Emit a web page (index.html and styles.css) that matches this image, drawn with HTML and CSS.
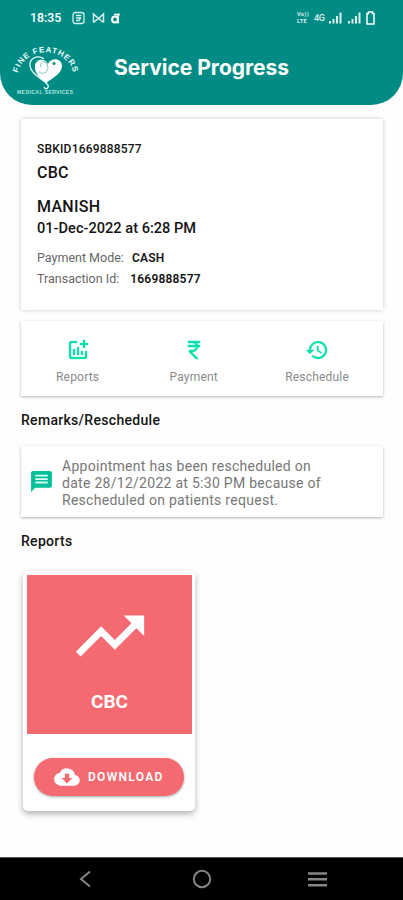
FILE: index.html
```html
<!DOCTYPE html>
<html lang="en">
<head>
<meta charset="utf-8">
<title>Service Progress</title>
<link rel="stylesheet" href="styles.css">
</head>
<body>
<header class="header">
  <div class="status">
    <span class="time">18:35</span>
    <svg class="notices" width="50" height="14" viewBox="0 0 50 14" fill="none" stroke="#d5efed" stroke-width="1.3">
      <rect x="1" y="1.500" width="11" height="11" rx="2.500"/><path d="M4 4.500h5.500M4 7h5M4 9.500h3l2-3"/>
      <path d="M21.500 11.500V3l5 4.500 5-4.500v8.500M21.500 11.500l5-4 5 4" stroke-width="1.500"/>
      <circle cx="43" cy="8.500" r="2.900" stroke="#fff" stroke-width="2"/><path d="M46 12.500V2.500M42 3.500h6" stroke="#fff" stroke-width="1.700"/>
    </svg>
    <div class="signals">
      <div class="volte"><span>Vo))</span><span>LTE</span></div>
      <span class="network">4G</span>
      <svg width="46" height="14" viewBox="0 0 46 14" fill="#d9f0ee">
        <path d="M0 10h2v2.500H0zM3.500 8h2v4.500h-2zM7 5h2v7.500H7zM10.500 1.500h2v11h-2zM19 10h2v2.500h-2zM22.500 8h2v4.500h-2zM26 5h2v7.500h-2zM29.500 1.500h2v11h-2z"/>
        <path d="M38 2.500h1.500V1h4v1.500H45V13h-7z" fill="none" stroke="#fff" stroke-width="1.500"/>
      </svg>
    </div>
  </div>
  <div class="titlebar">
    <svg class="logo" width="70" height="56" viewBox="0 0 70 56">
      <path id="arc" d="M8 31C14 3.500 57 3.500 63.500 31" fill="none"/>
      <text class="logo-name"><textPath href="#arc">FINE FEATHERS</textPath></text>
      <path d="M36 41C31 36 24 32 25 24c1-8 10-8 13-2 3-7 14-6 14 2 0 7-9 12-16 17z" fill="#fff"/>
      <path d="M34 17c-7-5-15 0-14 7 1 9 14 13 18 19 1 4-3 5-4 2" fill="none" stroke="#e8ffff" stroke-width="1.300"/>
      <path d="M29 30c6 4 11-2 8-8-2-4-8-2-6 3" fill="none" stroke="#7cc7c3"/>
      <circle cx="44" cy="21.500" r="1.500" fill="#008c84"/>
      <text class="logo-sub" x="7" y="52" textLength="56">MEDICAL SERVICES</text>
    </svg>
    <h1 class="title">Service Progress</h1>
  </div>
</header>
<main class="content">
  <section class="card booking">
    <div class="booking-id">SBKID1669888577</div>
    <div class="test">CBC</div>
    <div class="patient">MANISH</div>
    <div class="date">01-Dec-2022 at 6:28 PM</div>
    <div class="detail payment">Payment Mode:<b>CASH</b></div>
    <div class="detail transaction">Transaction Id:<b>1669888577</b></div>
  </section>
  <nav class="card actions">
    <a class="action"><svg width="24" height="24" viewBox="0 0 24 24" fill="#0be0ad" stroke="#0be0ad" stroke-width=".3"><path d="M22 5v2h-3v3h-2V7h-3V5h3V2h2v3h3zm-3 14H5V5h6V3H5c-1.100 0-2 .9-2 2v14c0 1.100.9 2 2 2h14c1.100 0 2-.9 2-2v-6h-2v6zm-4-6v4h2v-4h-2zm-4 4h2V9h-2v8zm-2 0v-6H7v6h2z"/></svg><span>Reports</span></a>
    <a class="action middle"><svg width="24" height="24" viewBox="0 0 24 24" fill="#0be0ad" stroke="#0be0ad" stroke-width=".5"><path d="M13.660 7c-.56-1.180-1.760-2-3.160-2H6V3h12v2h-3.260c.48.580.84 1.260 1.050 2H18v2h-2.020c-.25 2.800-2.610 5-5.480 5h-.73l6.730 7h-2.770L7 14v-2h3.500c1.760 0 3.220-1.300 3.460-3H6V7h7.660z"/></svg><span>Payment</span></a>
    <a class="action last"><svg width="24" height="24" viewBox="0 0 24 24" fill="#0be0ad" stroke="#0be0ad" stroke-width=".3"><path d="M13 3a9 9 0 0 0-9 9H1l3.890 3.890.07.140L9 12H6a7 7 0 1 1 2.060 4.940l-1.420 1.420A9 9 0 1 0 13 3zm-1 5v5l4.280 2.540.72-1.210-3.500-2.080V8H12z"/></svg><span>Reschedule</span></a>
  </nav>
  <h2 class="heading">Remarks/Reschedule</h2>
  <section class="card remark">
    <svg width="25" height="25" viewBox="0 0 24 24" fill="#04bf98"><path d="M20 2H4c-1.100 0-2 .9-2 2v18l4-4h14c1.100 0 2-.9 2-2V4c0-1.100-.9-2-2-2z"/><path fill="#d9fff5" d="M6 5.500h12v1.800H6zm0 3.300h12v1.800H6zm0 3.300h12v1.800H6z"/></svg>
    <p>Appointment has been rescheduled on<br>date 28/12/2022 at 5:30 PM because of<br>Rescheduled on patients request.</p>
  </section>
  <h2 class="heading reports-heading">Reports</h2>
  <article class="report">
    <div class="preview">
      <svg width="82" height="82" viewBox="0 0 24 24" fill="#fff"><path d="M16 6l2.290 2.290-4.880 4.880-4-4L2 16.590 3.410 18l6-6 4 4 6.300-6.290L22 12V6z"/></svg>
      <span>CBC</span>
    </div>
    <button class="download">
      <svg width="26" height="26" viewBox="0 0 24 24" fill="#fff"><path d="M19.350 10.040A7.490 7.490 0 0 0 5.350 8.040 6 6 0 0 0 6 20h13a5 5 0 0 0 .35-9.960zM17 13l-5 5-5-5h3V9h4v4h3z"/></svg>
      <span>DOWNLOAD</span>
    </button>
  </article>
</main>
<footer class="navbar">
  <svg width="403" height="42" viewBox="0 0 403 42" fill="none" stroke="#858585" stroke-width="2">
    <path d="M90 13.500L81 21l9 7.500"/><circle cx="202" cy="21" r="8.200"/><path d="M308 15.500h19M308 21.300h19M308 27.200h19" stroke-width="2.400"/>
  </svg>
</footer>
</body>
</html>
```
FILE: styles.css
```css
* { box-sizing: border-box; }
body {
  margin: 0;
  width: 403px;
  height: 900px;
  display: flex;
  flex-direction: column;
  overflow: hidden;
  background: #fefefe;
  color: #141414;
  font-family: Roboto, "Liberation Sans", sans-serif;
}
.header {
  height: 105px;
  flex: none;
  background: #008c84;
  border-radius: 0 0 32px 32px;
  color: #fff;
}
.status { height: 34px; display: flex; align-items: center; padding: 1px 28px 0 30px; }
.time { width: 31px; font-size: 12.3px; font-weight: 500; white-space: nowrap; }
.notices { margin-left: 11px; }
.signals { margin-left: auto; display: flex; align-items: center; gap: 4px; }
.volte { display: flex; flex-direction: column; font-size: 5.5px; line-height: 7px; font-weight: 700; color: #d9f0ee; width: 13px; letter-spacing: .4px; }
.network { font-size: 9px; font-weight: 500; color: #d9f0ee; width: 11px; letter-spacing: -0.4px; }
.titlebar { display: flex; height: 71px; padding-left: 10px; }
.logo { margin-top: 8px; }
.logo-name { font: 700 8px "Liberation Sans", sans-serif; fill: #e8ffff; letter-spacing: .9px; }
.logo-sub { font: 700 5px "Liberation Sans", sans-serif; fill: #b0e3df; }
.title {
  margin: 0 0 0 34px;
  padding-top: 19px;
  font: 700 21px/30px Inter, Roboto, sans-serif;
  white-space: nowrap;
}
.content { flex: 1; padding: 14px 20px 0 21px; }
.card { background: #fff; box-shadow: 0 1px 3px rgba(0, 0, 0, .3); border-radius: 1px; }
.booking { height: 191px; padding: 23px 16px 0; box-shadow: 0 0 4px rgba(0, 0, 0, .22); }
.booking-id { font-size: 12px; line-height: 14px; font-weight: 500; letter-spacing: .2px; }
.test { margin-top: 7px; font-size: 16px; line-height: 20px; font-weight: 500; letter-spacing: .2px; }
.patient { margin-top: 14px; font-size: 16px; line-height: 20px; font-weight: 500; letter-spacing: .3px; }
.date { margin-top: 2px; font-size: 14.6px; line-height: 19px; font-weight: 500; }
.detail { font-size: 12.5px; line-height: 18px; color: #666; }
.detail b { color: #141414; font-size: 12px; font-weight: 600; letter-spacing: .2px; }
.payment { margin-top: 11px; }
.payment b { margin-left: 8px; }
.transaction { margin-top: 3px; }
.transaction b { margin-left: 11px; }
.actions { height: 75px; margin-top: 11px; display: flex; justify-content: space-between; padding: 17px 34px 0 35px; }
.action { display: flex; flex-direction: column; align-items: center; font-size: 12px; line-height: 16px; color: #8a8a8a; gap: 7px; letter-spacing: .2px; }
.middle { margin-left: 3px; }
.heading { margin: 15px 0 0; font-size: 14px; line-height: 18px; font-weight: 500; letter-spacing: .3px; }
.remark { height: 71px; margin-top: 17px; display: flex; padding: 12px 8px 0; }
.remark svg { margin-top: 11px; flex: none; }
.remark p { margin: 0 0 0 8px; font-size: 14px; line-height: 17px; color: #777; white-space: nowrap; letter-spacing: .28px; }
.report {
  width: 172px;
  height: 240px;
  margin: 21px 0 0 2px;
  padding: 4px 3px 0 4px;
  border-radius: 5px;
  background: #fff;
  box-shadow: 0 3px 6px rgba(0, 0, 0, .3);
}
.preview { height: 159px; background: #f46a70; color: #fff; display: flex; flex-direction: column; align-items: center; padding-top: 20px; font-size: 19px; line-height: 24px; font-weight: 700; }
.preview span { margin-top: 13px; }
.download {
  margin: 24px 0 0 7px;
  width: 150px;
  height: 38px;
  border: 0;
  border-radius: 19px;
  background: #f46a70;
  color: #fff;
  box-shadow: 0 1px 3px rgba(0, 0, 0, .35);
  display: flex;
  align-items: center;
  padding: 0 0 0 20px;
  gap: 8px;
  font: 600 12px Roboto, sans-serif;
  letter-spacing: 1.3px;
}
.navbar { height: 43px; flex: none; background: #000; border-top: 1px solid #555; }
.navbar svg { display: block; }
```
